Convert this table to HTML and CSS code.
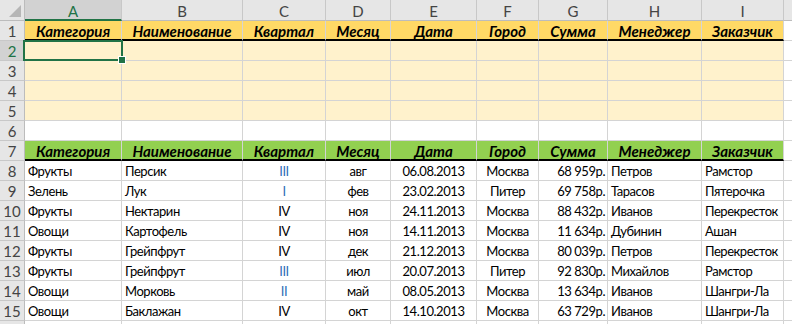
FILE: index.html
```html
<!DOCTYPE html>
<html lang="ru">
<head>
<meta charset="utf-8">
<link rel="stylesheet" href="styles.css">
</head>
<body>
<div class="sheet">
  <div class="corner"><span class="tri"></span></div>
  <div class="ch sel">A</div><div class="ch">B</div><div class="ch">C</div><div class="ch">D</div><div class="ch">E</div><div class="ch">F</div><div class="ch">G</div><div class="ch">H</div><div class="ch">I</div><div class="ch last"></div>

  <div class="rh">1</div>
  <div class="c hy th">Категория</div><div class="c hy th">Наименование</div><div class="c hy th">Квартал</div><div class="c hy th">Месяц</div><div class="c hy th">Дата</div><div class="c hy th">Город</div><div class="c hy th">Сумма</div><div class="c hy th">Менеджер</div><div class="c hy th">Заказчик</div><div class="c e"></div>

  <div class="rh sel">2</div>
  <div class="c ly active"></div><div class="c ly"></div><div class="c ly"></div><div class="c ly"></div><div class="c ly"></div><div class="c ly"></div><div class="c ly"></div><div class="c ly"></div><div class="c ly"></div><div class="c e"></div>

  <div class="rh">3</div>
  <div class="c ly"></div><div class="c ly"></div><div class="c ly"></div><div class="c ly"></div><div class="c ly"></div><div class="c ly"></div><div class="c ly"></div><div class="c ly"></div><div class="c ly"></div><div class="c e"></div>

  <div class="rh">4</div>
  <div class="c ly"></div><div class="c ly"></div><div class="c ly"></div><div class="c ly"></div><div class="c ly"></div><div class="c ly"></div><div class="c ly"></div><div class="c ly"></div><div class="c ly"></div><div class="c e"></div>

  <div class="rh">5</div>
  <div class="c ly"></div><div class="c ly"></div><div class="c ly"></div><div class="c ly"></div><div class="c ly"></div><div class="c ly"></div><div class="c ly"></div><div class="c ly"></div><div class="c ly"></div><div class="c e"></div>

  <div class="rh">6</div>
  <div class="c"></div><div class="c"></div><div class="c"></div><div class="c"></div><div class="c"></div><div class="c"></div><div class="c"></div><div class="c"></div><div class="c"></div><div class="c e"></div>

  <div class="rh">7</div>
  <div class="c hg th">Категория</div><div class="c hg th">Наименование</div><div class="c hg th">Квартал</div><div class="c hg th">Месяц</div><div class="c hg th">Дата</div><div class="c hg th">Город</div><div class="c hg th">Сумма</div><div class="c hg th">Менеджер</div><div class="c hg th">Заказчик</div><div class="c e"></div>

  <div class="rh">8</div>
  <div class="c">Фрукты</div><div class="c">Персик</div><div class="c ctr q">III</div><div class="c ctr">авг</div><div class="c ctr">06.08.2013</div><div class="c ctr">Москва</div><div class="c rt">68 959р.</div><div class="c">Петров</div><div class="c">Рамстор</div><div class="c e"></div>

  <div class="rh">9</div>
  <div class="c">Зелень</div><div class="c">Лук</div><div class="c ctr q">I</div><div class="c ctr">фев</div><div class="c ctr">23.02.2013</div><div class="c ctr">Питер</div><div class="c rt">69 758р.</div><div class="c">Тарасов</div><div class="c">Пятерочка</div><div class="c e"></div>

  <div class="rh">10</div>
  <div class="c">Фрукты</div><div class="c">Нектарин</div><div class="c ctr">IV</div><div class="c ctr">ноя</div><div class="c ctr">24.11.2013</div><div class="c ctr">Москва</div><div class="c rt">88 432р.</div><div class="c">Иванов</div><div class="c">Перекресток</div><div class="c e"></div>

  <div class="rh">11</div>
  <div class="c">Овощи</div><div class="c">Картофель</div><div class="c ctr">IV</div><div class="c ctr">ноя</div><div class="c ctr">14.11.2013</div><div class="c ctr">Москва</div><div class="c rt">11 634р.</div><div class="c">Дубинин</div><div class="c">Ашан</div><div class="c e"></div>

  <div class="rh">12</div>
  <div class="c">Фрукты</div><div class="c">Грейпфрут</div><div class="c ctr">IV</div><div class="c ctr">дек</div><div class="c ctr">21.12.2013</div><div class="c ctr">Москва</div><div class="c rt">80 039р.</div><div class="c">Петров</div><div class="c">Перекресток</div><div class="c e"></div>

  <div class="rh">13</div>
  <div class="c">Фрукты</div><div class="c">Грейпфрут</div><div class="c ctr q">III</div><div class="c ctr">июл</div><div class="c ctr">20.07.2013</div><div class="c ctr">Питер</div><div class="c rt">92 830р.</div><div class="c">Михайлов</div><div class="c">Рамстор</div><div class="c e"></div>

  <div class="rh">14</div>
  <div class="c">Овощи</div><div class="c">Морковь</div><div class="c ctr q">II</div><div class="c ctr">май</div><div class="c ctr">08.05.2013</div><div class="c ctr">Москва</div><div class="c rt">13 634р.</div><div class="c">Иванов</div><div class="c">Шангри-Ла</div><div class="c e"></div>

  <div class="rh">15</div>
  <div class="c">Овощи</div><div class="c">Баклажан</div><div class="c ctr">IV</div><div class="c ctr">окт</div><div class="c ctr">14.10.2013</div><div class="c ctr">Москва</div><div class="c rt">63 729р.</div><div class="c">Иванов</div><div class="c">Шангри-Ла</div><div class="c e"></div>

  <div class="rh"></div>
  <div class="c"></div><div class="c"></div><div class="c"></div><div class="c"></div><div class="c"></div><div class="c"></div><div class="c"></div><div class="c"></div><div class="c"></div><div class="c e"></div>
</div>
</body>
</html>
```
FILE: styles.css
```css
* { box-sizing: border-box; }
html, body { margin: 0; padding: 0; background: #fff; overflow: hidden; }
body { width: 792px; height: 324px; }

.sheet {
  display: grid;
  grid-template-columns: 25px 97px 121px 83px 65px 86px 62px 69px 94px 82px 1fr;
  grid-template-rows: 21px repeat(16, 20px);
  height: 324px;
  overflow: hidden;
  font-family: Lato, "Noto Sans", "Liberation Sans", sans-serif;
  font-size: 13px;
  color: #000;
}

.corner {
  background: #e6e6e6;
  border-right: 1px solid #bcbcbc;
  border-bottom: 1px solid #bcbcbc;
  position: relative;
}
.tri {
  position: absolute;
  right: 3px;
  bottom: 3px;
  width: 0;
  height: 0;
  border-left: 12px solid transparent;
  border-bottom: 12px solid #b6b6b6;
}

.ch {
  background: #e6e6e6;
  border-right: 1px solid #c8c8c8;
  border-bottom: 1px solid #bcbcbc;
  color: #444;
  font-size: 15px;
  display: flex;
  align-items: center;
  justify-content: center;
  padding-top: 1px;
}
.ch.sel {
  background: #d2d2d2;
  color: #217346;
  border-bottom: 2px solid #217346;
  padding-top: 2px;
}
.ch.last { border-right: none; }

.rh {
  background: #e6e6e6;
  border-right: 1px solid #bcbcbc;
  border-bottom: 1px solid #c8c8c8;
  color: #444;
  font-size: 15px;
  display: flex;
  align-items: center;
  justify-content: center;
}
.rh.sel {
  background: #d2d2d2;
  color: #217346;
  border-right: 2px solid #217346;
  padding-left: 1px;
}

.c {
  border-right: 1px solid #d4d4d4;
  border-bottom: 1px solid #d4d4d4;
  padding: 1px 3px 0;
  display: flex;
  align-items: center;
  white-space: nowrap;
  overflow: visible;
  letter-spacing: -0.45px;
}
.c.e { border-right: none; }

.hy { background: #ffd966; }
.hg { background: #92d050; }
.ly { background: #fff2cc; }

.th {
  font-weight: bold;
  font-style: italic;
  font-size: 15px;
  letter-spacing: 0;
  justify-content: center;
  border-bottom: 2px solid #000;
  padding-top: 1px;
}

.ctr { justify-content: center; }
.rt { justify-content: flex-end; padding-right: 2px; }
.q { color: #2f6fb8; }

.active { position: relative; }
.active::after {
  content: "";
  position: absolute;
  left: -2px;
  top: -1px;
  right: -2px;
  bottom: -1px;
  border: 2px solid #217346;
  pointer-events: none;
}
.active::before {
  content: "";
  position: absolute;
  right: -5px;
  bottom: -4px;
  width: 6px;
  height: 6px;
  background: #217346;
  border: 1px solid #fff;
  z-index: 2;
}
```
